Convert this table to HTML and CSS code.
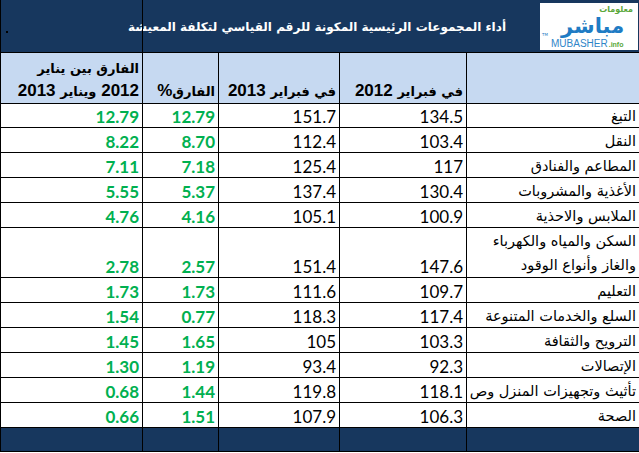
FILE: index.html
```html
<!DOCTYPE html>
<html lang="ar">
<head>
<meta charset="utf-8">
<title>أداء المجموعات الرئيسية المكونة للرقم القياسي لتكلفة المعيشة</title>
<link rel="stylesheet" href="styles.css">
</head>
<body>
<div class="sheet">
  <div class="title">
    <span class="dot"></span>
    <h1 class="title-text">أداء المجموعات الرئيسية المكونة للرقم القياسي لتكلفة المعيشة</h1>
    <div class="logo">
      <span class="logo-small">معلومات</span>
      <span class="logo-ar">مباشر</span>
      <span class="logo-tm">TM</span>
      <span class="logo-en">MUBASHER<span class="logo-info">.info</span></span>
    </div>
  </div>

  <div class="hd"><span><span class="ar">الفارق بين يناير</span><br>2012 <span class="ar">ويناير</span> 2013</span></div>
  <div class="hd"><span><span class="ar">الفارق</span>%</span></div>
  <div class="hd"><span><span class="ar">في فبراير</span> 2013</span></div>
  <div class="hd"><span><span class="ar">في فبراير</span> 2012</span></div>
  <div class="hd"></div>

  <div class="num pos">12.79</div><div class="num pos">12.79</div><div class="num">151.7</div><div class="num">134.5</div><div class="lbl"><span>التبغ</span></div>
  <div class="num pos">8.22</div><div class="num pos">8.70</div><div class="num">112.4</div><div class="num">103.4</div><div class="lbl"><span>النقل</span></div>
  <div class="num pos">7.11</div><div class="num pos">7.18</div><div class="num">125.4</div><div class="num">117</div><div class="lbl"><span>المطاعم والفنادق</span></div>
  <div class="num pos">5.55</div><div class="num pos">5.37</div><div class="num">137.4</div><div class="num">130.4</div><div class="lbl"><span>الأغذية والمشروبات</span></div>
  <div class="num pos">4.76</div><div class="num pos">4.16</div><div class="num">105.1</div><div class="num">100.9</div><div class="lbl"><span>الملابس والاحذية</span></div>
  <div class="num pos">2.78</div><div class="num pos">2.57</div><div class="num">151.4</div><div class="num">147.6</div><div class="lbl lbl-wrap"><span>السكن والمياه والكهرباء<br>والغاز وأنواع الوقود</span></div>
  <div class="num pos">1.73</div><div class="num pos">1.73</div><div class="num">111.6</div><div class="num">109.7</div><div class="lbl"><span>التعليم</span></div>
  <div class="num pos">1.54</div><div class="num pos">0.77</div><div class="num">118.3</div><div class="num">117.4</div><div class="lbl"><span>السلع والخدمات المتنوعة</span></div>
  <div class="num pos">1.45</div><div class="num pos">1.65</div><div class="num">105</div><div class="num">103.3</div><div class="lbl"><span>الترويح والثقافة</span></div>
  <div class="num pos">1.30</div><div class="num pos">1.19</div><div class="num">93.4</div><div class="num">92.3</div><div class="lbl"><span>الإتصالات</span></div>
  <div class="num pos">0.68</div><div class="num pos">1.44</div><div class="num">119.8</div><div class="num">118.1</div><div class="lbl"><span>تأثيث وتجهيزات المنزل وص</span></div>
  <div class="num pos">0.66</div><div class="num pos">1.51</div><div class="num">107.9</div><div class="num">106.3</div><div class="lbl"><span>الصحة</span></div>

  <div class="ft"></div><div class="ft"></div><div class="ft"></div><div class="ft"></div><div class="ft"></div>
</div>
</body>
</html>
```

FILE: styles.css
```css
html, body {
  margin: 0;
  padding: 0;
  background: #ffffff;
  overflow: hidden;
}

.sheet {
  box-sizing: border-box;
  width: 639px;
  display: grid;
  grid-template-columns: 141px 75px 120px 126px 172px;
  grid-template-rows: 52px 50px 23px 24px 24px 24px 24px 49px 24px 24px 24px 24px 24px 24px 23px;
  gap: 1px;
  padding: 0 0 1px 1px;
  background: #000000;
}

/* title bar */
.title {
  grid-column: 1 / -1;
  position: relative;
  display: flex;
  align-items: center;
  background: #17375e;
  padding: 2px 1px 2px 0;
}
.title::after {
  content: "";
  position: absolute;
  left: 141px;
  top: 0;
  bottom: 0;
  width: 1px;
  background: #000000;
}
.dot {
  align-self: flex-start;
  width: 2px;
  height: 2px;
  margin: 29px auto 0 5px;
  background: #000000;
}
.title-text {
  margin: 1px 34px 0 0;
  direction: rtl;
  color: #ffffff;
  font: bold 12px/20px "DejaVu Sans", sans-serif;
  white-space: nowrap;
}

/* logo */
.logo {
  position: relative;
  width: 98px;
  height: 47px;
  background: #ffffff;
  flex: none;
}
.logo-small {
  position: absolute;
  right: 5px;
  top: 2px;
  color: #5aa83a;
  font: bold 8px/9px "DejaVu Sans", sans-serif;
  direction: rtl;
}
.logo-ar {
  position: absolute;
  left: 21px;
  top: 12px;
  color: #1f7cc4;
  font: bold 21px/22px "DejaVu Sans", sans-serif;
  direction: rtl;
}
.logo-tm {
  position: absolute;
  left: 2px;
  top: 29px;
  color: #1f7cc4;
  font: 4px/5px "DejaVu Sans", sans-serif;
}
.logo-en {
  position: absolute;
  left: 11px;
  top: 36px;
  color: #2f86c8;
  font: 10px/10px "Liberation Sans", sans-serif;
}
.logo-info {
  color: #5aa83a;
  font: bold 7px/8px "Liberation Sans", sans-serif;
  margin-left: 1px;
}

/* column headers */
.hd {
  display: flex;
  flex-direction: column;
  justify-content: flex-end;
  background: #c6d9f1;
  direction: rtl;
  text-align: right;
  padding: 0 3px 0 0;
  color: #000000;
  font: bold 17px/22px "Liberation Sans", "DejaVu Sans", sans-serif;
  white-space: nowrap;
}
.ar {
  font-family: "DejaVu Sans", sans-serif;
  font-size: 13px;
}

/* body cells */
.num {
  display: flex;
  align-items: flex-end;
  justify-content: flex-end;
  background: #ffffff;
  padding: 0 3px 0 0;
  color: #000000;
  font: 17px/20px Lato, sans-serif;
}
.pos {
  color: #00b050;
  font-weight: 700;
}
.lbl {
  display: flex;
  flex-direction: column;
  justify-content: flex-end;
  overflow: hidden;
  background: #ffffff;
  direction: rtl;
  text-align: right;
  padding: 0 3px 0 0;
  color: #000000;
  font: 14.5px/22px "DejaVu Sans", sans-serif;
  white-space: nowrap;
}
.lbl-wrap {
  line-height: 24px;
}

.ft {
  background: #17375e;
}
```
